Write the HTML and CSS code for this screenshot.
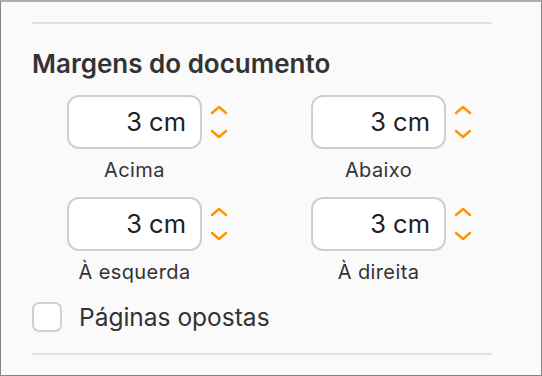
FILE: index.html
```html
<!DOCTYPE html>
<html lang="pt">
<head>
  <meta charset="UTF-8" />
  <title>Margens do documento</title>
  <link rel="stylesheet" href="styles.css">
</head>
<body>
  <div class="panel">
    <hr class="divider">
    <h2>Margens do documento</h2>
    <div class="fields">
      <div class="field">
        <div class="control">
          <div class="box">3 cm</div>
          <div class="stepper">
            <svg viewBox="0 0 18 10" width="18" height="10"><path d="M2 8 L9 2 L16 8" /></svg>
            <svg viewBox="0 0 18 10" width="18" height="10"><path d="M2 2 L9 8 L16 2" /></svg>
          </div>
        </div>
        <div class="label">Acima</div>
      </div>
      <div class="field">
        <div class="control">
          <div class="box">3 cm</div>
          <div class="stepper">
            <svg viewBox="0 0 18 10" width="18" height="10"><path d="M2 8 L9 2 L16 8" /></svg>
            <svg viewBox="0 0 18 10" width="18" height="10"><path d="M2 2 L9 8 L16 2" /></svg>
          </div>
        </div>
        <div class="label">Abaixo</div>
      </div>
      <div class="field">
        <div class="control">
          <div class="box">3 cm</div>
          <div class="stepper">
            <svg viewBox="0 0 18 10" width="18" height="10"><path d="M2 8 L9 2 L16 8" /></svg>
            <svg viewBox="0 0 18 10" width="18" height="10"><path d="M2 2 L9 8 L16 2" /></svg>
          </div>
        </div>
        <div class="label">À esquerda</div>
      </div>
      <div class="field">
        <div class="control">
          <div class="box">3 cm</div>
          <div class="stepper">
            <svg viewBox="0 0 18 10" width="18" height="10"><path d="M2 8 L9 2 L16 8" /></svg>
            <svg viewBox="0 0 18 10" width="18" height="10"><path d="M2 2 L9 8 L16 2" /></svg>
          </div>
        </div>
        <div class="label">À direita</div>
      </div>
    </div>
    <label class="check">
      <span class="checkbox"></span>
      <span>Páginas opostas</span>
    </label>
    <hr class="divider">
  </div>
</body>
</html>
```

FILE: styles.css
```css
body {
  margin: 0;
  font-family: Inter, "Noto Sans", sans-serif;
  color: #333;
}
.panel {
  box-sizing: border-box;
  width: 542px;
  height: 376px;
  background: #fafafa;
  border: 1px solid #858585;
  border-top: 2px solid #b0b0b0;
  padding: 20px 49px 0 31px;
}
.divider {
  border: none;
  height: 2px;
  background: #e0e0e0;
  margin: 0;
}
h2 {
  font-size: 26px;
  font-weight: 600;
  color: #333;
  margin: 25px 0 16px;
  line-height: 30px;
}
.fields {
  display: grid;
  grid-template-columns: 244px 200px;
  row-gap: 15px;
  padding-left: 35px;
}
.control {
  display: flex;
  align-items: center;
  gap: 8px;
}
.box {
  box-sizing: border-box;
  width: 135px;
  height: 54px;
  border: 2px solid #cfcfcf;
  border-radius: 12px;
  background: #fff;
  text-align: right;
  padding-right: 14px;
  font-size: 25.5px;
  line-height: 50px;
  color: #222;
}
.stepper {
  display: flex;
  flex-direction: column;
  gap: 14px;
}
.stepper path {
  fill: none;
  stroke: #ff9500;
  stroke-width: 2.5;
  stroke-linecap: round;
  stroke-linejoin: round;
}
.label {
  width: 135px;
  text-align: center;
  font-size: 20px;
  letter-spacing: 0.4px;
  line-height: 24px;
  margin-top: 9px;
}
.check {
  display: flex;
  align-items: center;
  gap: 17px;
  margin: 18px 0 21px;
  font-size: 24.5px;
  line-height: 30px;
}
.checkbox {
  box-sizing: border-box;
  width: 30px;
  height: 30px;
  border: 2px solid #d0d0d0;
  border-radius: 7px;
  background: #fff;
}
```
